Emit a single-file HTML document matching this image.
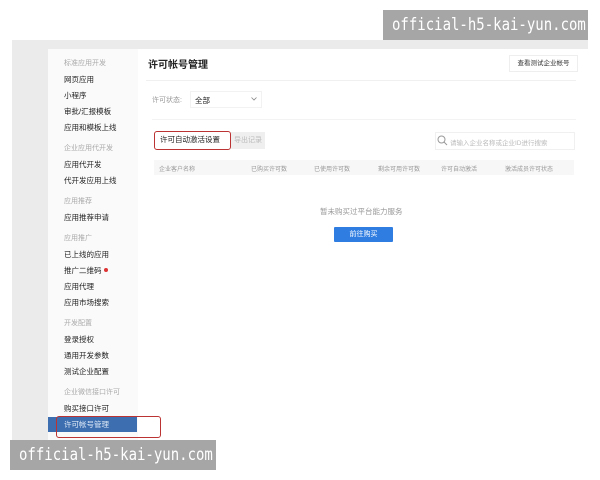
<!DOCTYPE html>
<html><head><meta charset="utf-8"><style>
*{margin:0;padding:0;box-sizing:border-box}
body{width:600px;height:480px;background:#fff;position:relative;overflow:hidden;font-family:"Liberation Sans","Noto Sans CJK SC",sans-serif;color:#333}
.a{position:absolute;white-space:nowrap}
.s{font-size:7.5px;color:#222}
.g{font-size:7px;color:#aaa}
.h{font-size:6px;color:#999}
.wm{position:absolute;background:#a6a6a6;color:#fff;font-family:"DejaVu Sans Mono","Liberation Mono",monospace;font-size:14px;line-height:30px;padding-left:9px;white-space:nowrap;overflow:hidden;height:30px}
.wm span{display:inline-block;transform:scaleY(1.2)}
</style></head><body>
<div class="a" style="left:12px;top:40px;width:576px;height:9px;background:#ebebeb"></div>
<div class="a" style="left:12px;top:40px;width:36px;height:400px;background:#ebebeb"></div>
<div class="a" style="left:48px;top:49px;width:90px;height:391px;background:#fafafa"></div>

<div class="a g" style="left:64px;top:58px">标准应用开发</div>
<div class="a s" style="left:64px;top:74px">网页应用</div>
<div class="a s" style="left:64px;top:90px">小程序</div>
<div class="a s" style="left:64px;top:106px">审批/汇报模板</div>
<div class="a s" style="left:64px;top:122px">应用和模板上线</div>
<div class="a g" style="left:64px;top:143px">企业应用代开发</div>
<div class="a s" style="left:64px;top:159px">应用代开发</div>
<div class="a s" style="left:64px;top:175px">代开发应用上线</div>
<div class="a g" style="left:64px;top:196px">应用推荐</div>
<div class="a s" style="left:64px;top:212px">应用推荐申请</div>
<div class="a g" style="left:64px;top:233px">应用推广</div>
<div class="a s" style="left:64px;top:249px">已上线的应用</div>
<div class="a s" style="left:64px;top:265px">推广二维码</div>
<div class="a" style="left:104px;top:268px;width:4px;height:4px;border-radius:50%;background:#d33"></div>
<div class="a s" style="left:64px;top:281px">应用代理</div>
<div class="a s" style="left:64px;top:297px">应用市场搜索</div>
<div class="a g" style="left:64px;top:318px">开发配置</div>
<div class="a s" style="left:64px;top:334px">登录授权</div>
<div class="a s" style="left:64px;top:350px">通用开发参数</div>
<div class="a s" style="left:64px;top:366px">测试企业配置</div>
<div class="a g" style="left:64px;top:387px">企业微信接口许可</div>
<div class="a s" style="left:64px;top:403px">购买接口许可</div>
<div class="a" style="left:48px;top:417px;width:89px;height:15px;background:#3d6fb0"></div>
<div class="a s" style="left:64px;top:419px;color:#dfe9f7">许可帐号管理</div>
<div class="a" style="left:56px;top:416px;width:105px;height:22px;border:1.5px solid #b33;border-radius:3px"></div>

<div class="a" style="left:148px;top:56px;font-size:10px;font-weight:bold;color:#222">许可帐号管理</div>
<div class="a" style="left:509px;top:55px;width:69px;height:17px;border:1px solid #eee;font-size:6.5px;line-height:15px;text-align:center;color:#333">查看测试企业帐号</div>
<div class="a" style="left:146px;top:80px;width:430px;height:1px;background:#f0f0f0"></div>
<div class="a" style="left:152px;top:95px;font-size:7px;color:#999">许可状态:</div>
<div class="a" style="left:190px;top:91px;width:72px;height:17px;border:1px solid #f2f2f2"></div>
<div class="a" style="left:195px;top:95px;font-size:7.5px;color:#222">全部</div>
<svg class="a" style="left:251px;top:97px" width="6" height="4" viewBox="0 0 6 4"><path d="M0.5 0.5L3 3L5.5 0.5" fill="none" stroke="#888" stroke-width="0.8"/></svg>
<div class="a" style="left:152px;top:119px;width:424px;height:1px;background:#f3f3f3"></div>
<div class="a" style="left:154px;top:131px;width:77px;height:19px;border:1.5px solid #b33;border-radius:3px;font-size:7.5px;line-height:16px;padding-left:5px;color:#222">许可自动激活设置</div>
<div class="a" style="left:231px;top:132px;width:34px;height:17px;background:#efefef;font-size:7px;line-height:17px;text-align:center;color:#bbb">导出记录</div>
<div class="a" style="left:435px;top:132px;width:140px;height:18px;border:1px solid #f0f0f0"></div>
<svg class="a" style="left:437px;top:135px" width="11" height="11" viewBox="0 0 11 11"><circle cx="4.5" cy="4.5" r="3.5" fill="none" stroke="#999" stroke-width="1"/><path d="M7 7l3 3" stroke="#999" stroke-width="1"/></svg>
<div class="a" style="left:450px;top:137px;font-size:6.5px;color:#bbb">请输入企业名称或企业ID进行搜索</div>
<div class="a" style="left:154px;top:160px;width:420px;height:15px;background:#f7f7f7"></div>
<div class="a h" style="left:159px;top:164px">企业客户名称</div>
<div class="a h" style="left:251px;top:164px">已购买许可数</div>
<div class="a h" style="left:314px;top:164px">已使用许可数</div>
<div class="a h" style="left:378px;top:164px">剩余可用许可数</div>
<div class="a h" style="left:441px;top:164px">许可自动激活</div>
<div class="a h" style="left:505px;top:164px">激活成员许可状态</div>
<div class="a" style="left:320px;top:206px;font-size:7.5px;color:#999">暂未购买过平台能力服务</div>
<div class="a" style="left:334px;top:227px;width:59px;height:15px;background:#2f7de1;border-radius:1px;font-size:7px;line-height:15px;text-align:center;color:#fff">前往购买</div>

<div class="wm" style="left:383px;top:10px;width:205px"><span>official-h5-kai-yun.com</span></div>
<div class="wm" style="left:10px;top:440px;width:206px"><span>official-h5-kai-yun.com</span></div>
</body></html>
